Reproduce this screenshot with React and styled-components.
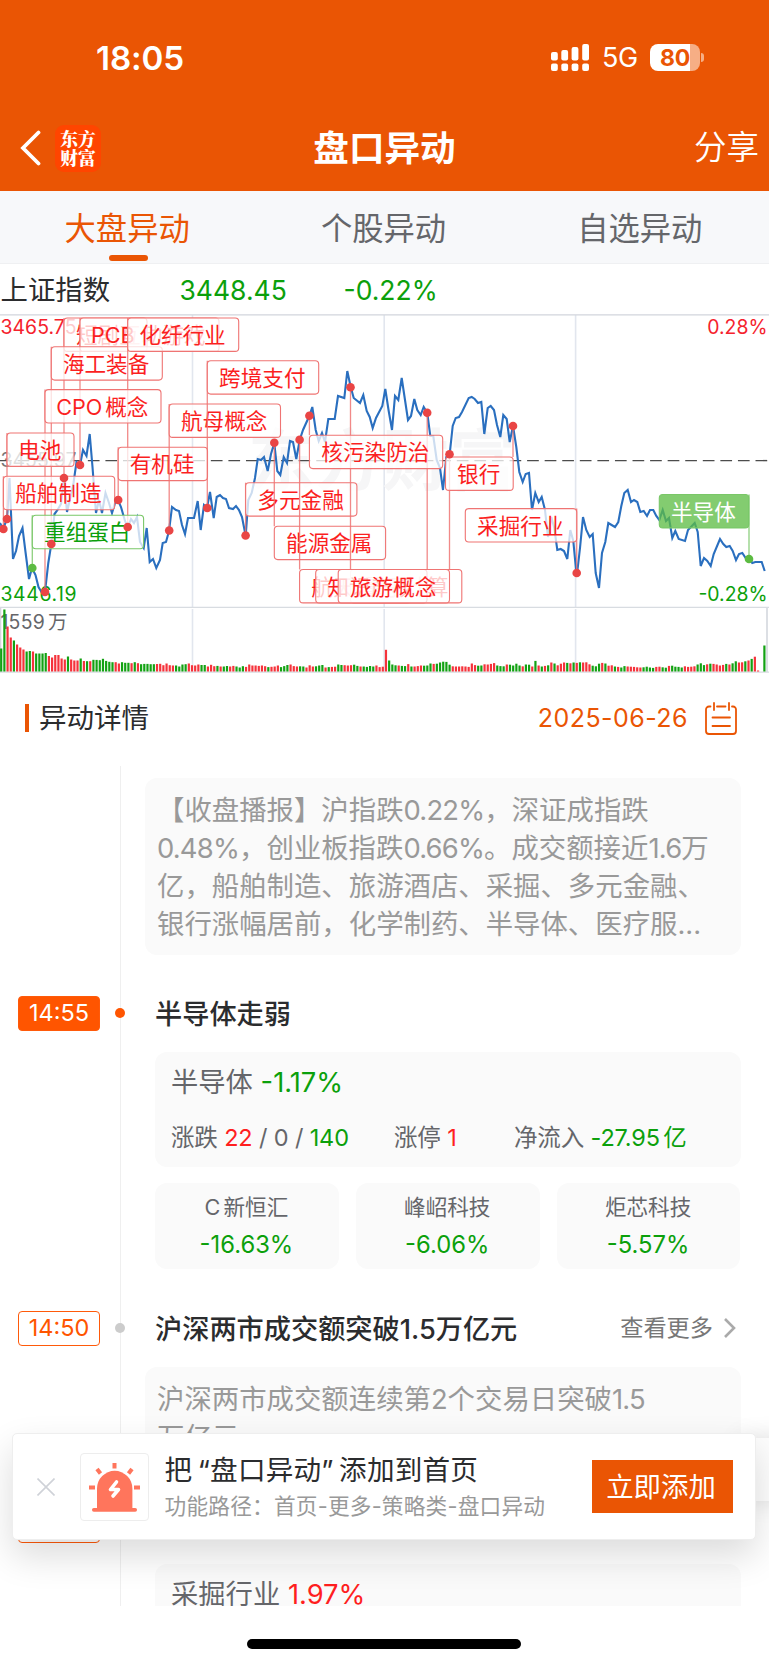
import React from "react";
import styled, { createGlobalStyle, css } from "styled-components";

const ORANGE = "#ea5504";
const RED = "#f5222d";
const GREEN = "#0ba00b";
const FONT = `Inter, "Noto Sans CJK SC", sans-serif`;

const Global = createGlobalStyle`
  * { box-sizing: border-box; }
  body { margin: 0; background: #fff; font-family: ${FONT}; color: #2b2c2e; }
`;

const Screen = styled.div`
  position: relative;
  width: 769px;
  height: 1665px;
  overflow: hidden;
  display: flex;
  flex-direction: column;
  background: #fff;
  white-space: nowrap;
`;

/* ---------- header ---------- */
const Header = styled.header`
  height: 191px;
  flex: none;
  background: ${ORANGE};
  color: #fff;
`;
const StatusBar = styled.div`
  height: 105px;
  padding: 10px 65px 0 96px;
  display: flex;
  align-items: center;
`;
const Clock = styled.div`
  flex: 1;
  font-size: 33.2px;
  font-weight: 600;
  letter-spacing: -0.1px;
`;
const Network = styled.div`
  font-size: 27px;
  margin: 0 12px 0 12px;
  width: 36px;
  letter-spacing: -0.5px;
`;
const Battery = styled.div`
  width: 50px;
  height: 27px;
  border-radius: 8px;
  background: linear-gradient(90deg, #fff 0 40px, #f6ae85 40px);
  color: ${ORANGE};
  font-size: 23px;
  font-weight: 700;
  line-height: 28px;
  text-align: center;
  letter-spacing: -0.2px;
`;
const BatteryTip = styled.div`
  width: 3px;
  height: 9px;
  margin-left: 1px;
  border-radius: 0 3px 3px 0;
  background: #f6ae85;
`;
const NavBar = styled.div`
  height: 86px;
  display: grid;
  grid-template-columns: 1fr auto 1fr;
  align-items: center;
`;
const NavLeft = styled.div`
  display: flex;
  align-items: center;
  padding-left: 20px;
`;
const AppLogo = styled.div`
  width: 46px;
  height: 47px;
  margin-left: 14px;
  border-radius: 9px;
  background: #ff4500;
  display: flex;
  flex-direction: column;
  align-items: center;
  justify-content: center;
  font: 900 17.8px/19.5px "Noto Serif CJK SC", "Noto Sans CJK SC", serif;
`;
const NavTitle = styled.h1`
  margin: 1px 0 0;
  font-size: 35.6px;
  font-weight: 600;
  line-height: 1;
`;
const ShareLink = styled.div`
  font-size: 32.5px;
  line-height: 1;
  text-align: right;
  font-weight: 350;
  padding: 1px 10px 0 0;
`;

/* ---------- tabs and index ---------- */
const Tabs = styled.nav`
  height: 73px;
  flex: none;
  display: grid;
  grid-template-columns: repeat(3, 1fr);
  background: #f7f8fa;
  border-bottom: 1px solid #eff0f2;
`;
const Tab = styled.div`
  display: flex;
  flex-direction: column;
  align-items: center;
  padding: 21px 2px 0 0;
  font-size: 31.3px;
  line-height: 35px;
  color: ${(p) => (p.$active ? ORANGE : "#65666a")};
  &::after {
    content: "";
    width: 39px;
    height: 6px;
    margin: 8px 0 0 2px;
    border-radius: 3px;
    background: ${(p) => (p.$active ? ORANGE : "transparent")};
  }
`;
const IndexRow = styled.div`
  height: 50px;
  flex: none;
  display: flex;
  align-items: center;
  padding: 2px 0 0 0.5px;
  font-size: 27.4px;
  line-height: 1;
`;
const IndexName = styled.div`
  width: 179px;
  padding-top: 1px;
`;
const IndexValue = styled.div`
  width: 164px;
  font-size: 26.5px;
  color: ${GREEN};
`;
const Chart = styled.svg`
  display: block;
  flex: none;
`;

/* ---------- details header ---------- */
const DetailHeader = styled.div`
  height: 90px;
  flex: none;
  display: flex;
  align-items: center;
  padding: 0 32px 0 25px;
`;
const Accent = styled.div`
  width: 4px;
  height: 28px;
  background: ${ORANGE};
`;
const DetailTitle = styled.h2`
  flex: 1;
  margin: 2px 0 0 10px;
  font-size: 27.5px;
  font-weight: 400;
  line-height: 1;
`;
const DateText = styled.div`
  font-size: 25px;
  letter-spacing: 0.45px;
  margin-right: 17px;
  color: ${ORANGE};
`;

/* ---------- timeline ---------- */
const Timeline = styled.main`
  height: 843px;
  flex: none;
  overflow: hidden;
  background: linear-gradient(#efefef, #efefef) 120px 3px / 1px 100% no-repeat;
`;
const NewsCard = styled.div`
  margin: ${(p) => (p.$first ? "15px" : "21px")} 28.5px 0 145px;
  padding: 12.5px 12px 11.5px;
  height: ${(p) => p.$height}px;
  border-radius: 12px;
  background: #fafafa;
  color: #999;
  font-size: 27.4px;
  line-height: 38.3px;
`;
const Num = styled.span`
  letter-spacing: -0.8px;
`;
const EventRow = styled.div`
  height: 36px;
  margin-top: ${(p) => p.$gap}px;
  padding: 0 33px 0 18px;
  display: flex;
  align-items: center;
`;
const TimeBadge = styled.div`
  width: 82px;
  height: 35px;
  border-radius: 4px;
  border: 1.5px solid #ff5a0a;
  text-align: center;
  font-size: 23.5px;
  line-height: 32px;
  color: #ff5500;
  ${(p) =>
    p.$active &&
    css`
      background: #ff5500;
      color: #fff;
    `}
`;
const Dot = styled.div`
  width: 10px;
  height: 10px;
  margin: 0 30px 0 15px;
  border-radius: 50%;
  background: ${(p) => (p.$active ? "#ff5500" : "#ccc")};
`;
const EventTitle = styled.h3`
  flex: 1;
  margin: 3px 0 0;
  font-size: 27.2px;
  font-weight: 500;
  line-height: 1;
`;
const More = styled.div`
  display: flex;
  align-items: center;
  gap: 11px;
  font-size: 23.2px;
  line-height: 30px;
  padding-bottom: 1px;
  color: #777;
`;
const SectorCard = styled.div`
  margin: 21px 28.5px 0 155px;
  padding: 11px 16px;
  height: 115px;
  border-radius: 12px;
  background: #fafafa;
  color: #65666a;
`;
const SectorName = styled.div`
  font-size: 27.3px;
  line-height: 40px;
`;
const SectorStats = styled.div`
  display: flex;
  margin-top: 16px;
  font-size: 23.5px;
  line-height: 38px;
`;
const Stat = styled.div`
  width: ${(p) => p.$width}px;
  letter-spacing: -0.15px;
`;
const Tone = styled.span`
  color: ${(p) => (p.$up ? "#ff1f1f" : GREEN)};
  word-spacing: ${(p) => (p.$tight ? "-3px" : "normal")};
`;
const StockGrid = styled.div`
  display: grid;
  grid-template-columns: repeat(3, 1fr);
  gap: 17px;
  margin: 16px 28.5px 0 155px;
`;
const StockCard = styled.div`
  height: 86px;
  padding: 6px 1px 0 0;
  border-radius: 12px;
  background: #fafafa;
  color: #65666a;
  text-align: center;
  font-size: 21.6px;
  line-height: 36px;
  word-spacing: -3px;
`;
const StockChange = styled.div`
  margin-top: 1.5px;
  font-size: 23.8px;
  color: ${GREEN};
`;

/* ---------- bottom ---------- */
const HomeArea = styled.footer`
  flex: 1;
  display: flex;
  justify-content: center;
  padding: 33px 1px 0 0;
  &::after {
    content: "";
    width: 274px;
    height: 10px;
    border-radius: 5px;
    background: #000;
  }
`;
const SideHandle = styled.div`
  position: absolute;
  left: 740px;
  top: 1438px;
  width: 60px;
  height: 63px;
  background: #fdfdfd;
  box-shadow: 0 0 24px rgba(0, 0, 0, 0.12);
`;
const Toast = styled.aside`
  position: absolute;
  left: 12px;
  top: 1433px;
  width: 744px;
  height: 107px;
  display: flex;
  align-items: center;
  padding: 0 22px 0 24px;
  background: #fff;
  border: 1px solid #eee;
  border-radius: 5px;
  box-shadow: 0 16px 36px rgba(0, 0, 0, 0.14);
`;
const AlarmBox = styled.div`
  width: 69px;
  height: 68px;
  margin: 0 15.5px 0 25px;
  border: 1px solid #ededed;
  border-radius: 4px;
`;
const ToastBody = styled.div`
  flex: 1;
`;
const ToastTitle = styled.div`
  padding-top: 2px;
  font-size: 27.6px;
  line-height: 37px;
  word-spacing: -2.5px;
  letter-spacing: 0.2px;
`;
const ToastPath = styled.div`
  font-size: 21.7px;
  line-height: 34px;
  letter-spacing: 0.2px;
  color: #999;
`;
const AddButton = styled.button`
  width: 141px;
  height: 53px;
  padding: 0 3px 0 0;
  border: 0;
  background: ${ORANGE};
  color: #fff;
  font: 400 27.4px/50px ${FONT};
`;

/* ---------- chart data ---------- */
const PRICE =
  "0,523 3,529 7,519 9.5,478 13,559 16,551 19,536 22.5,528 25.5,552 29,579 32,568 35.5,575 38.5,587 41.5,592 45,592 48.3,563 51.3,544 54.5,514 57.5,510 61,504 64,478 67,512 70.5,497 73.5,483 76.5,462 80,465 83,450 86.5,456 89.7,434 92.5,467 96,513 99,500 102,513 105.5,493 109,503 112,513 115,503 118,500 121,507 125,521 127.7,527 131,519 134,523 137,517 140,542 143.7,548 146.7,528 149.7,562 153,559 156.3,568 160,560 162.7,543 166,542 169,531 172,507 176,510 179,511 182,525 185,534 188,518 194,518 197.7,501 200.7,530 204,505 207,508 210,492 213.7,518 216.7,497 220,495 223,498 226,499 229,508 233,509 236,506 239,510 242,517 245.7,536 248.3,500 251.7,493 255,478 257.7,459 261,460 264,457 267.7,471 271,454 274.3,443 277.3,471 280.3,475 283.7,457 287,463 290,441 293,442 296.3,459 299.7,440 303,430 309.3,416 312.3,407 315.7,430 318.7,441 322,433 325,442 328.3,419 334.7,419 338,396 344.3,398 347.3,371 350.7,387 353.7,398 360,403 363.3,395 366.7,411 369.7,417 372.7,428 376,418 382.3,406 385.3,389 388.7,411 392,430 395,396 398.3,400 401.7,378 405,400 408,420 411,416 414.3,399 417.3,410 420.7,415 423.7,407 427.3,413 430.3,436 433.3,436 436.7,460 440,468 443,490 446.3,457 449.7,454 452.7,426 455.7,418 459,417 462,412 468.7,398 471.7,397 474.7,399 478,403 481.3,402 484.3,434 487.7,408 490.7,406 494,410 497,425 500.3,437 503.3,415 506.7,419 509.7,442 513,426 516.3,447 519.3,472 522.7,482 525.7,474 529,473 532,510 535.3,493 538.7,502 541.7,497 545,510 548,537 551.3,517 554.3,528 557.3,550 560.7,549 564,551 567.3,559 570.3,530 573.3,541 576.7,577 580,548 583,517 586.3,530 589.7,537 592.7,534 595.7,573 599,588 602,553 605.3,542 608.3,523 615,527 618.3,522 621.3,506 624.3,493 627.7,490 631,502 634,500 637.3,502 640.3,512 643.7,511 647,516 650,510 653.3,510 656.3,516 659.3,520 662.7,510 666,521 669,518 672.3,538 675.3,531 678.7,539 685,541 688,530 694.7,523 697.7,532 700.7,566 704,558 707.3,561 710.7,566 713.7,554 720,539 723.3,544 726.3,547 729.7,546 732.7,551 736,560 739,554 742.3,553 745.7,558 749,559 752.3,563 755.3,562 761.7,562 764.7,571";

// [label, box left, box top, box width, anchor x, anchor y, kind]
const MARKS = [
  ["短剧互动游戏", 64, 318, 155, 64, 478],
  ["PCB", 80, 318, 67, 80, 465],
  ["海工装备", 51.3, 346.7, 111, 51.3, 544],
  ["化纤行业", 127.7, 318, 111, 127.7, 527],
  ["CPO 概念", 45, 389.6, 116, 45, 592],
  ["电池", 7, 433, 67, 7, 519],
  ["船舶制造", 3.4, 476.3, 111.3, 3.4, 529],
  ["重组蛋白", 32.3, 515.3, 111.3, 32.3, 568, "down"],
  ["有机硅", 118.2, 447.2, 89.3, 118.2, 500],
  ["航母概念", 169.2, 404, 111.3, 169.2, 530.5],
  ["跨境支付", 207.3, 360.7, 111.4, 207.3, 508],
  ["多元金融", 245.6, 482.7, 111.3, 245.6, 535.5],
  ["能源金属", 274.3, 526.2, 111.3, 274.3, 442.7],
  ["航天航空", 299.6, 569.5, 111.3, 299.6, 439.7],
  ["量子计算", 350.5, 569.5, 111.3, 350.5, 387.3],
  ["知识产权", 315.7, 569.5, 111.3, 427.2, 412.7],
  ["旅游概念", 338.2, 569.5, 111.3, 449.5, 454.3],
  ["核污染防治", 309.4, 435.2, 133.3, 309.4, 415.7],
  ["银行", 445.5, 457, 67.7, 513, 426],
  ["采掘行业", 465.3, 508.6, 111.4, 576.7, 573],
  ["半导体", 659.3, 494.5, 89.5, 749, 559, "fill"],
];

const EARLY_HEIGHTS = [
  23, 62, 45, 34, 31, 27, 24, 22, 20, 20.5, 20, 18, 18, 18, 18.5, 15.5, 14, 16.5, 16.5, 13, 12, 15,
  12, 11, 11, 13, 10.5, 10.3, 10.3, 11.7, 11.6, 11.3, 12.7, 10.6, 9.7, 9.3, 9.3, 8, 9.3, 8.7, 8.7,
  8.3, 9.3, 8.3, 7.3, 7.6, 7.6, 7.3, 7.3, 7.5, 7.7, 6.3, 8, 6.3, 6, 6, 5, 7, 7.3, 8, 6.3, 6, 7,
  6.5, 6.5, 5, 6.7, 5.3, 5.6, 5, 5, 5.5, 5, 5.6, 5, 4, 5.3, 4.6, 7, 6,
];
const MID_HEIGHTS = [
  6, 5.6, 6, 5.3, 4.4, 4.7, 5, 6, 4.4, 5.4, 6.5, 7, 5.4, 5, 5.2, 5, 4, 6.2, 5, 5.2, 6, 6.5, 4, 4.4,
  4.6, 4.8, 7, 6.5, 6.3, 6, 6.3, 6.8, 5.6, 5, 5, 4.6, 5.5, 5, 6, 4.4, 4.8, 21.7, 11, 7, 6.2, 6, 5.6,
  5.4, 7.4, 5, 5, 5.4, 6, 5.8, 6, 8, 7.6, 7.8, 9, 9.8, 9.6, 6.8, 5.2, 5, 5, 5.2, 5, 4.6, 8, 6.4, 5.8,
  6, 7.2, 7, 7.6, 8.4, 6, 5.4, 5.2, 7, 6.8, 6, 7.8, 6,
];
const LATE_HEIGHTS = [
  5.2, 7, 6.8, 5, 10.6, 6, 5, 5.6, 6.2, 9, 8, 6.2, 7.8, 9, 8.6, 8.2, 9, 8.6, 9.2, 9, 9.2, 7.2, 5.8, 5.2,
  7.8, 8.6, 8, 5.8, 6.2, 5, 4.6, 4, 5.4, 5, 4.8, 4.6, 4.2, 4, 4.2, 4.8, 4, 3.6, 4.6, 4.8, 4.2, 3.8, 5.6,
  5.8, 4.8, 4.6, 4, 5.2, 4.6, 4.8, 5.2, 7, 8.2, 6.4, 7.2, 7.8, 7.6, 7, 6, 6.6, 7.6, 7, 8.2, 10.2, 9,
  9.2, 10.2, 11, 12.6, 14.8, 1, 0, 26,
];
const EARLY_TONES = "ggrrgrrrggrggggrrrrrrgrrrgrgrgggggggrrgggrgrgggggrrrrrrggggrrrrggrrrgrggrrgggrrr";
const MID_TONES = "rrrrgrrrgggrrrggrrrgggrgrrggrrrggrggggrrrrgggrggrgrrrgggrgggggrrrrrrrrggrrrrgggrgggg";
const LATE_TONES = "grggrgrgrgrgrrrgrgrgrrrgggrgrrgrggrrrrrggggrrggrggggrrrrgggrgrrrrgrggrrgrgrrrg";
const toBars = (heights, tones) =>
  heights.map((h, i) => ({ h, up: tones[tones.length - heights.length + i] !== "g" }));
const BARS = [
  ...toBars(EARLY_HEIGHTS, EARLY_TONES.slice(0, EARLY_HEIGHTS.length)),
  ...toBars(MID_HEIGHTS, MID_TONES),
  ...toBars(LATE_HEIGHTS, LATE_TONES),
].map((bar, i) => ({ ...bar, x: 0.1 + i * 3.18 }));

function Label({ mark }) {
  const [text, x, y, w, ax, ay, kind] = mark;
  const down = kind === "down";
  const fill = kind === "fill";
  const stroke = down || fill ? "#7ac768" : "#ef7473";
  return (
    <g>
      <line x1={ax} x2={ax} y1={y} y2={ay} stroke={stroke} strokeWidth="1.3" strokeOpacity="0.85" />
      <rect
        x={x} y={y} width={w} height="33.4" rx="3.5"
        fill={fill ? "#5cbc43" : "#fff"} fillOpacity="0.76"
        stroke={stroke} strokeWidth="1.1"
      />
      <text
        x={x + w / 2 - 0.7} y={y + 25} textAnchor="middle" fontSize="21.6" wordSpacing="-3"
        fill={fill ? "#fff" : down ? GREEN : "#fb1f1f"}
      >
        {text}
      </text>
    </g>
  );
}

function MarketChart() {
  return (
    <Chart width="769" height="359" viewBox="0 314 769 359" fontFamily={FONT}>
      <g stroke="#e2e6ee" strokeWidth="1.6">
        {[192.5, 384.2, 575.6].map((x) => (
          <path key={x} d={`M${x} 315V607M${x} 609V672`} />
        ))}
        <path d="M0.5 608V672M767 608V672" stroke="#d4d7de" />
      </g>
      <path d="M0 314.8H769" stroke="#d2d5dc" strokeWidth="1.3" />
      <path d="M0 607.4H769M0 672.2H769" stroke="#d8dce1" strokeWidth="1.2" />
      <text x="248" y="485" fontSize="67" fontWeight="700" fill="#f6f6f7">东方财富</text>
      <path d="M0 460.6H769" stroke="#4c4c4c" strokeWidth="1.4" strokeDasharray="11.7 5.87" />
      <g fontSize="19.4">
        <text x="0.5" y="333.5" fill={RED} textLength="76">3465.75</text>
        <text x="0.5" y="466.5" fill="#777" textLength="76">3455.97</text>
        <text x="0.5" y="600.5" fill={GREEN} textLength="76">3446.19</text>
        <text x="0.5" y="628.5" fill="#65666a" wordSpacing="-2.5" textLength="67">1559 万</text>
        <text x="767.5" y="333.5" fill={RED} textAnchor="end">0.28%</text>
        <text x="767.5" y="600.5" fill={GREEN} textAnchor="end">-0.28%</text>
      </g>
      {BARS.map(({ x, h, up }) => (
        <rect key={x} x={x} y={671.5 - h} width="2.2" height={h} fill={up ? "#f5333b" : "#13a213"} />
      ))}
      <polyline points={PRICE} fill="none" stroke="#2a6fbf" strokeWidth="2.1" strokeLinejoin="miter" />
      {MARKS.map((m) => (
        <Label key={m[0]} mark={m} />
      ))}
      {MARKS.map((m) => (
        <circle key={m[0]} cx={m[4]} cy={m[5]} r="4.3" fill={m[6] ? "#5cbb42" : "#e94545"} />
      ))}
    </Chart>
  );
}

const Signal = () => (
  <svg width="39" height="28" viewBox="0 0 39 28" fill="#fff">
    {[0, 10.3, 20.6, 31.2].map((x, i) => (
      <g key={x}>
        <rect x={x} y={[8, 6, 3, 0][i]} width="6.8" height={[8.5, 10.5, 13.5, 16.5][i]} rx="2" />
        <rect x={x} y="19.5" width="6.8" height="7.5" rx="2" />
      </g>
    ))}
  </svg>
);

const Calendar = () => (
  <svg width="32" height="33" viewBox="0 0 32 33" fill="none" stroke={ORANGE} strokeWidth="1.8" strokeLinecap="round">
    <path d="M5.5 4.5H4a3 3 0 0 0-3 3V29a3 3 0 0 0 3 3H28a3 3 0 0 0 3-3V7.5a3 3 0 0 0-3-3H27M12 4.5H20.5M9 1V8M24 1V8M7.5 15.5H25M7.5 24H25" />
  </svg>
);

const Alarm = () => (
  <svg width="67" height="66" viewBox="0 0 67 66">
    <g fill="#ff755c">
      <path d="M16 56V34.500a17.700 17.700 0 0 1 35.400 0V56Z" />
      <rect x="11" y="54" width="45" height="3.700" rx="1.800" />
    </g>
    <path d="M33.500 9v5.500M16 15l3.500 4.500M51 15l-3.500 4.500M8 33.500h6M53 33.500h6" stroke="#ff755c" strokeWidth="4" />
    <path d="M35.500 28L29.500 35.500H37.500L32 42" fill="none" stroke="#fff" strokeWidth="3.600" strokeLinecap="round" strokeLinejoin="round" />
  </svg>
);

function Event({ time, title, gap, active, more }) {
  return (
    <EventRow $gap={gap}>
      <TimeBadge $active={active}>{time}</TimeBadge>
      <Dot $active={active} />
      <EventTitle>{title}</EventTitle>
      {more && (
        <More>
          查看更多
          <svg width="12" height="20" viewBox="0 0 12 20" fill="none" stroke="#aaa" strokeWidth="2.6">
            <path d="M1 1L10 10L1 19" />
          </svg>
        </More>
      )}
    </EventRow>
  );
}

const STOCKS = [
  ["C 新恒汇", "-16.63%"],
  ["峰岹科技", "-6.06%"],
  ["炬芯科技", "-5.57%"],
];

export default function App() {
  return (
    <Screen>
      <Global />
      <Header>
        <StatusBar>
          <Clock>18:05</Clock>
          <Signal />
          <Network>5G</Network>
          <Battery>80</Battery>
          <BatteryTip />
        </StatusBar>
        <NavBar>
          <NavLeft>
            <svg width="21" height="36" viewBox="0 0 21 36" fill="none" stroke="#fff" strokeWidth="3.8" strokeLinecap="round">
              <path d="M18.500 2.500L3 18L18.500 33.500" />
            </svg>
            <AppLogo>
              <span>东方</span>
              <span>财富</span>
            </AppLogo>
          </NavLeft>
          <NavTitle>盘口异动</NavTitle>
          <ShareLink>分享</ShareLink>
        </NavBar>
      </Header>
      <Tabs>
        <Tab $active>大盘异动</Tab>
        <Tab>个股异动</Tab>
        <Tab>自选异动</Tab>
      </Tabs>
      <IndexRow>
        <IndexName>上证指数</IndexName>
        <IndexValue>3448.45</IndexValue>
        <IndexValue>-0.22%</IndexValue>
      </IndexRow>
      <MarketChart />
      <DetailHeader>
        <Accent />
        <DetailTitle>异动详情</DetailTitle>
        <DateText>2025-06-26</DateText>
        <Calendar />
      </DetailHeader>
      <Timeline>
        <NewsCard $first $height={177}>
          【收盘播报】沪指跌<Num>0.22%</Num>，深证成指跌<br />
          <Num>0.48%</Num>，创业板指跌<Num>0.66%</Num>。成交额接近<Num>1.6</Num>万<br />
          亿，船舶制造、旅游酒店、采掘、多元金融、<br />
          银行涨幅居前，化学制药、半导体、医疗服...
        </NewsCard>
        <Event time="14:55" title="半导体走弱" gap={40} active />
        <SectorCard>
          <SectorName>半导体 <Tone>-1.17%</Tone></SectorName>
          <SectorStats>
            <Stat $width={223}>涨跌 <Tone $up>22</Tone> / 0 / <Tone>140</Tone></Stat>
            <Stat $width={120}>涨停 <Tone $up>1</Tone></Stat>
            <Stat $width={200}>净流入 <Tone $tight>-27.95 亿</Tone></Stat>
          </SectorStats>
        </SectorCard>
        <StockGrid>
          {STOCKS.map(([name, change]) => (
            <StockCard key={name}>
              {name}
              <StockChange>{change}</StockChange>
            </StockCard>
          ))}
        </StockGrid>
        <Event time="14:50" title="沪深两市成交额突破1.5万亿元" gap={41} more />
        <NewsCard $height={101}>
          沪深两市成交额连续第2个交易日突破<Num>1.5</Num><br />
          万亿元
        </NewsCard>
        <Event time="14:43" title="采掘行业走强" gap={39} />
        <SectorCard>
          <SectorName>采掘行业 <Tone $up>1.97%</Tone></SectorName>
        </SectorCard>
      </Timeline>
      <HomeArea />
      <SideHandle />
      <Toast>
        <svg width="18" height="18" viewBox="0 0 18 18" stroke="#cfd2d8" strokeWidth="1.6">
          <path d="M.5 .5L17.500 17.500M17.500 .5L.5 17.500" />
        </svg>
        <AlarmBox>
          <Alarm />
        </AlarmBox>
        <ToastBody>
          <ToastTitle>把 “盘口异动” 添加到首页</ToastTitle>
          <ToastPath>功能路径：首页-更多-策略类-盘口异动</ToastPath>
        </ToastBody>
        <AddButton>立即添加</AddButton>
      </Toast>
    </Screen>
  );
}
